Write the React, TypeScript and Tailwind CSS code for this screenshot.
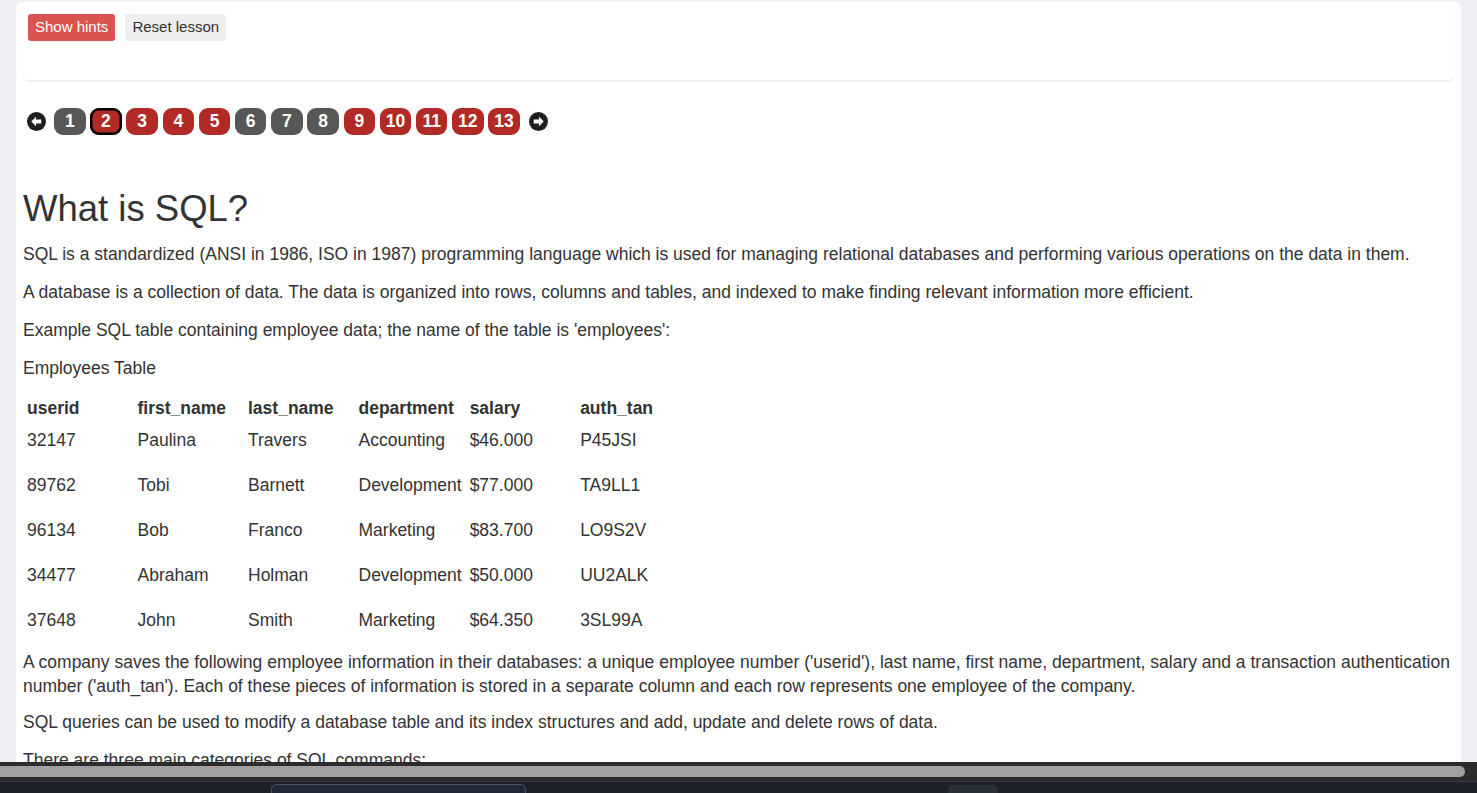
import React from "react";

const PAGES = [
  { n: 1, done: false },
  { n: 2, done: true, current: true },
  { n: 3, done: true },
  { n: 4, done: true },
  { n: 5, done: true },
  { n: 6, done: false },
  { n: 7, done: false },
  { n: 8, done: false },
  { n: 9, done: true },
  { n: 10, done: true },
  { n: 11, done: true },
  { n: 12, done: true },
  { n: 13, done: true },
];

const EMPLOYEES = [
  ["32147", "Paulina", "Travers", "Accounting", "$46.000", "P45JSI"],
  ["89762", "Tobi", "Barnett", "Development", "$77.000", "TA9LL1"],
  ["96134", "Bob", "Franco", "Marketing", "$83.700", "LO9S2V"],
  ["34477", "Abraham", "Holman", "Development", "$50.000", "UU2ALK"],
  ["37648", "John", "Smith", "Marketing", "$64.350", "3SL99A"],
];

const COLUMNS = ["userid", "first_name", "last_name", "department", "salary", "auth_tan"];

function ArrowCircle({ dir }: { dir: "left" | "right" }) {
  return (
    <svg width="19" height="19" viewBox="0 0 20 20" className="shrink-0">
      <circle cx="10" cy="10" r="10" fill="#1f1f1f" />
      {dir === "left" ? (
        <path d="M4.5 10 L9.5 5 L9.5 8 L15 8 L15 12 L9.5 12 L9.5 15 Z" fill="#fff" />
      ) : (
        <path d="M15.5 10 L10.5 5 L10.5 8 L5 8 L5 12 L10.5 12 L10.5 15 Z" fill="#fff" />
      )}
    </svg>
  );
}

function Pager() {
  return (
    <div className="flex items-center h-[28px]">
      <div className="ml-[4px] mr-[8px]">
        <ArrowCircle dir="left" />
      </div>
      <div className="flex gap-[4.7px]">
        {PAGES.map((p) => (
          <div
            key={p.n}
            className={
              "w-[31.5px] h-[27px] rounded-[9px] flex items-center justify-center text-white font-bold text-[17.5px] " +
              (p.done ? "bg-[#b22a26] " : "bg-[#575757] ") +
              (p.current ? "ring-[2.5px] ring-black ring-inset" : "")
            }
          >
            {p.n}
          </div>
        ))}
      </div>
      <div className="ml-[9px]">
        <ArrowCircle dir="right" />
      </div>
    </div>
  );
}

export default function App() {
  return (
    <div
      className="h-[793px] w-[1477px] overflow-hidden bg-[#eff0f6] flex flex-col text-[#333]"
      style={{ fontFamily: '"Liberation Sans", Arial, sans-serif' }}
    >
      <div className="flex-1 overflow-hidden pt-[2px] px-[16px]">
        <div className="bg-white rounded-t-[6px] h-full px-[7px]">
          {/* hints toolbar */}
          <div className="h-[79px] rounded-b-[6px] shadow-[0_1px_2px_rgba(0,0,0,0.06)] border-b border-[#f0f0f0] pt-[12px] px-[5px] flex items-start gap-[10px]">
            <button className="h-[27px] px-[7px] rounded-[3px] bg-[#d9534f] text-white text-[15px]">Show hints</button>
            <button className="h-[27px] px-[7px] rounded-[3px] bg-[#eeeeee] text-[#333] text-[15px]">Reset lesson</button>
          </div>

          <div className="mt-[26px]">
            <Pager />
          </div>

          <div className="mt-[53px] text-[17.5px] leading-[25px]">
            <h1 className="text-[36.5px] leading-[42px] mb-[12px]">What is SQL?</h1>
            <p className="mb-[13px]">
              SQL is a standardized (ANSI in 1986, ISO in 1987) programming language which is used for managing relational databases and performing various operations on the data in them.
            </p>
            <p className="mb-[13px]">
              A database is a collection of data. The data is organized into rows, columns and tables, and indexed to make finding relevant information more efficient.
            </p>
            <p className="mb-[13px]">Example SQL table containing employee data; the name of the table is 'employees':</p>
            <p className="mb-[11px]">Employees Table</p>

            <table className="border-collapse mb-[1px]">
              <thead>
                <tr>
                  {COLUMNS.map((c) => (
                    <th key={c} className="w-[110.5px] text-left font-bold px-[4px] pt-[4px] pb-[3px] align-top">
                      {c}
                    </th>
                  ))}
                </tr>
              </thead>
              <tbody>
                {EMPLOYEES.map((row) => (
                  <tr key={row[0]} className="h-[45px]">
                    {row.map((cell, i) => (
                      <td key={i} className="px-[4px] pt-[4px] pb-[16px] align-top whitespace-nowrap">
                        {cell}
                      </td>
                    ))}
                  </tr>
                ))}
              </tbody>
            </table>

            <p className="mb-[12px] leading-[24px]">
              A company saves the following employee information in their databases: a unique employee number ('userid'), last name, first name, department, salary and a transaction authentication number ('auth_tan'). Each of these pieces of information is stored in a separate column and each row represents one employee of the company.
            </p>
            <p className="mb-[13px]">
              SQL queries can be used to modify a database table and its index structures and add, update and delete rows of data.
            </p>
            <p>There are three main categories of SQL commands:</p>
          </div>
        </div>
      </div>

      {/* horizontal scrollbar */}
      <div className="h-[19px] bg-[#2c2c2c] shrink-0 pt-[4px] pr-[12px]">
        <div className="h-[11px] bg-[#a0a0a0] rounded-r-[6px]" />
      </div>
      {/* taskbar strip */}
      <div className="h-[12px] shrink-0 bg-[#1c212b] border-t border-[#3a3a3a] relative">
        <div className="absolute left-[271px] top-[2px] w-[255px] h-[12px] rounded-t-[5px] bg-[#222833] border border-[#4c525a]" />
        <div className="absolute left-[948px] top-[3px] w-[50px] h-[12px] rounded-t-[5px] bg-[#2a3039]" />
      </div>
    </div>
  );
}
